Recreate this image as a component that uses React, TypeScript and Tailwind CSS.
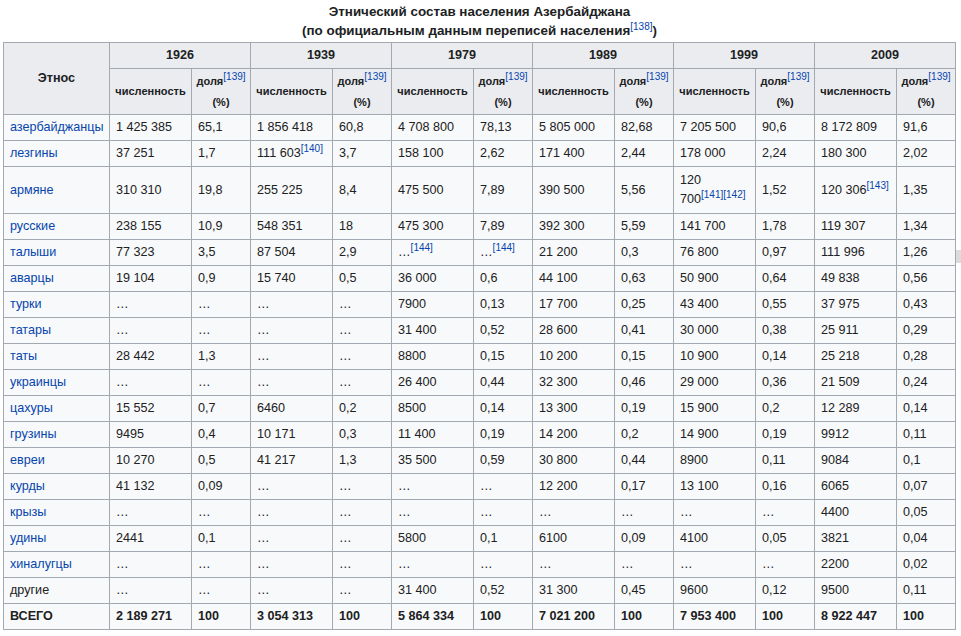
import React from 'react';

const YEARS = ['1926', '1939', '1979', '1989', '1999', '2009'];

type Row = { name: string; link: boolean; total?: boolean; cells: string[] };

// "^n" inside a cell value marks a footnote reference
const ROWS: Row[] = [
  { name: 'азербайджанцы', link: true, cells: ['1 425 385', '65,1', '1 856 418', '60,8', '4 708 800', '78,13', '5 805 000', '82,68', '7 205 500', '90,6', '8 172 809', '91,6'] },
  { name: 'лезгины', link: true, cells: ['37 251', '1,7', '111 603^140', '3,7', '158 100', '2,62', '171 400', '2,44', '178 000', '2,24', '180 300', '2,02'] },
  { name: 'армяне', link: true, cells: ['310 310', '19,8', '255 225', '8,4', '475 500', '7,89', '390 500', '5,56', '120 700^141^142', '1,52', '120 306^143', '1,35'] },
  { name: 'русские', link: true, cells: ['238 155', '10,9', '548 351', '18', '475 300', '7,89', '392 300', '5,59', '141 700', '1,78', '119 307', '1,34'] },
  { name: 'талыши', link: true, cells: ['77 323', '3,5', '87 504', '2,9', '…^144', '…^144', '21 200', '0,3', '76 800', '0,97', '111 996', '1,26'] },
  { name: 'аварцы', link: true, cells: ['19 104', '0,9', '15 740', '0,5', '36 000', '0,6', '44 100', '0,63', '50 900', '0,64', '49 838', '0,56'] },
  { name: 'турки', link: true, cells: ['…', '…', '…', '…', '7900', '0,13', '17 700', '0,25', '43 400', '0,55', '37 975', '0,43'] },
  { name: 'татары', link: true, cells: ['…', '…', '…', '…', '31 400', '0,52', '28 600', '0,41', '30 000', '0,38', '25 911', '0,29'] },
  { name: 'таты', link: true, cells: ['28 442', '1,3', '…', '…', '8800', '0,15', '10 200', '0,15', '10 900', '0,14', '25 218', '0,28'] },
  { name: 'украинцы', link: true, cells: ['…', '…', '…', '…', '26 400', '0,44', '32 300', '0,46', '29 000', '0,36', '21 509', '0,24'] },
  { name: 'цахуры', link: true, cells: ['15 552', '0,7', '6460', '0,2', '8500', '0,14', '13 300', '0,19', '15 900', '0,2', '12 289', '0,14'] },
  { name: 'грузины', link: true, cells: ['9495', '0,4', '10 171', '0,3', '11 400', '0,19', '14 200', '0,2', '14 900', '0,19', '9912', '0,11'] },
  { name: 'евреи', link: true, cells: ['10 270', '0,5', '41 217', '1,3', '35 500', '0,59', '30 800', '0,44', '8900', '0,11', '9084', '0,1'] },
  { name: 'курды', link: true, cells: ['41 132', '0,09', '…', '…', '…', '…', '12 200', '0,17', '13 100', '0,16', '6065', '0,07'] },
  { name: 'крызы', link: true, cells: ['…', '…', '…', '…', '…', '…', '…', '…', '…', '…', '4400', '0,05'] },
  { name: 'удины', link: true, cells: ['2441', '0,1', '…', '…', '5800', '0,1', '6100', '0,09', '4100', '0,05', '3821', '0,04'] },
  { name: 'хиналугцы', link: true, cells: ['…', '…', '…', '…', '…', '…', '…', '…', '…', '…', '2200', '0,02'] },
  { name: 'другие', link: false, cells: ['…', '…', '…', '…', '31 400', '0,52', '31 300', '0,45', '9600', '0,12', '9500', '0,11'] },
  { name: 'ВСЕГО', link: false, total: true, cells: ['2 189 271', '100', '3 054 313', '100', '5 864 334', '100', '7 021 200', '100', '7 953 400', '100', '8 922 447', '100'] },
];

function Ref({ n }: { n: string }) {
  return <sup className="text-[10px] text-[#0645ad] font-normal">[{n}]</sup>;
}

function Cell({ value }: { value: string }) {
  const [text, ...refs] = value.split('^');
  const cut = text.lastIndexOf(' ');
  const head = cut >= 0 ? text.slice(0, cut + 1) : '';
  const tail = cut >= 0 ? text.slice(cut + 1) : text;
  // keep the last word glued to its footnotes, as the wiki renders it
  return (
    <>
      {head}
      <span className="whitespace-nowrap">
        {tail}
        {refs.map((r) => (
          <Ref key={r} n={r} />
        ))}
      </span>
    </>
  );
}

export default function App() {
  return (
    <div className="bg-white min-h-[636px] pl-[3px] text-[#202122] font-['Liberation_Sans',Arial,sans-serif]">
      <table className="table-fixed border-collapse w-[953px] text-[12.6px]">
        <caption className="font-bold text-[13.4px] leading-[19px] pt-[2px] pb-[2px]">
          Этнический состав населения Азербайджана
          <br />
          (по официальным данным переписей населения<Ref n="138" />)
        </caption>
        <colgroup>
          <col className="w-[106px]" />
          {YEARS.map((y) => (
            <React.Fragment key={y}>
              <col className="w-[82px]" />
              <col className="w-[59px]" />
            </React.Fragment>
          ))}
        </colgroup>
        <thead>
          <tr className="h-[26px]">
            <th rowSpan={2} className="border border-[#a2a9b1] bg-[#eaecf0] font-bold">
              Этнос
            </th>
            {YEARS.map((y) => (
              <th key={y} colSpan={2} className="border border-[#a2a9b1] bg-[#eaecf0] font-bold">
                {y}
              </th>
            ))}
          </tr>
          <tr className="h-[46px]">
            {YEARS.map((y) => (
              <React.Fragment key={y}>
                <th className="border border-[#a2a9b1] bg-[#eaecf0] text-[11px] font-bold px-[5px]">
                  численность
                </th>
                <th className="border border-[#a2a9b1] bg-[#eaecf0] text-[11px] font-bold leading-[21px] px-[4px]">
                  доля<Ref n="139" />
                  <br />
                  (%)
                </th>
              </React.Fragment>
            ))}
          </tr>
        </thead>
        <tbody>
          {ROWS.map((row) => (
            <tr key={row.name} className={row.name === 'армяне' ? 'h-[47px]' : 'h-[26px]'}>
              <td
                className={
                  'border border-[#a2a9b1] bg-[#f8f9fa] px-[6px] ' +
                  (row.link ? 'text-[#0645ad]' : '') +
                  (row.total ? ' font-bold' : '')
                }
              >
                {row.name}
              </td>
              {row.cells.map((c, i) => (
                <td
                  key={i}
                  className={
                    'border border-[#a2a9b1] bg-[#f8f9fa] px-[6px] leading-[19px]' +
                    (row.total ? ' font-bold' : '')
                  }
                >
                  <Cell value={c} />
                </td>
              ))}
            </tr>
          ))}
        </tbody>
      </table>
      <div className="absolute left-[956px] top-[250px] w-[5px] h-[13px] bg-[#dcdcdc]" />
    </div>
  );
}
